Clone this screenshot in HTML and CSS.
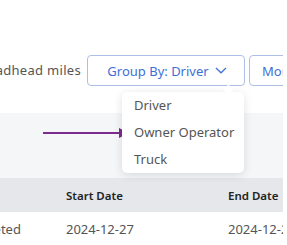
FILE: index.html
```html
<!DOCTYPE html>
<html lang="en">
<head>
    <meta charset="UTF-8">
    <title>Loads - Group By</title>
    <link rel="stylesheet" href="styles.css">
</head>
<body>
    <div class="frame">
        <div class="toolbar">
            <span class="label">Deadhead miles</span>
            <button class="btn group-btn">Group By: Driver
                <svg class="chev" width="12" height="7" viewBox="0 0 12 7"><path d="M1 1l5 4.8L11 1" fill="none" stroke="#3d6fd6" stroke-width="1.2"/></svg>
            </button>
            <button class="btn more-btn">More</button>

            <div class="menu">
                <div class="menu-item">Driver</div>
                <div class="menu-item">Owner Operator</div>
                <div class="menu-item">Truck</div>
            </div>
        </div>

        <div class="band">
            <svg class="arrow" width="90" height="14" viewBox="0 0 90 14"><path d="M0 7h78" stroke="#7b2c8c" stroke-width="2.2"/><path d="M76 2l10 5-10 5z" fill="#7b2c8c"/></svg>
        </div>

        <table class="grid">
            <thead>
                <tr><th class="c-status"></th><th>Start Date</th><th>End Date</th></tr>
            </thead>
            <tbody>
                <tr><td class="c-status">Completed</td><td>2024-12-27</td><td>2024-12-28</td></tr>
            </tbody>
        </table>
    </div>
</body>
</html>
```

FILE: styles.css
```css
body {
    margin: 0;
    background: #fff;
    font-family: "Noto Sans", "DejaVu Sans", sans-serif;
    color: #555;
}
.frame {
    width: 283px;
    height: 245px;
    overflow: hidden;
    position: relative;
}
.toolbar {
    height: 113px;
    display: flex;
    align-items: flex-start;
    justify-content: flex-end;
    padding-top: 55px;
    box-sizing: border-box;
    gap: 4px;
    position: relative;
    margin-right: -60px;
}
.toolbar > * {
    flex-shrink: 0;
}
.label {
    font-size: 13px;
    letter-spacing: 0.3px;
    color: #555;
    line-height: 31px;
    margin-right: 2px;
    white-space: nowrap;
}
.btn {
    height: 31px;
    border: 1px solid #aebfe6;
    border-radius: 4px;
    background: #fff;
    color: #3d6fd6;
    font-family: inherit;
    font-size: 13px;
    padding: 0 12px;
    white-space: nowrap;
}
.group-btn {
    width: 158px;
    display: flex;
    align-items: center;
    justify-content: center;
    gap: 6px;
    padding-left: 14px;
}
.more-btn {
    width: 94px;
    text-align: left;
}
.menu {
    position: absolute;
    left: 122px;
    top: 92px;
    width: 122px;
    background: #fff;
    border-radius: 5px;
    box-shadow: 0 2px 10px rgba(0, 0, 0, 0.12);
    z-index: 2;
}
.menu::before {
    content: "";
    position: absolute;
    right: 12px;
    top: -6px;
    width: 7px;
    height: 7px;
    background: #fff;
    transform: rotate(45deg);
}
.menu-item {
    height: 27px;
    line-height: 27px;
    padding-left: 12px;
    font-size: 13px;
    color: #555;
    white-space: nowrap;
}
.band {
    height: 65px;
    background: #f5f6f8;
    position: relative;
}
.arrow {
    position: absolute;
    left: 43px;
    top: 13px;
}
.grid {
    border-collapse: collapse;
    margin-left: -96px;
    table-layout: fixed;
    width: 486px;
}
.grid th, .grid td {
    width: 162px;
    text-align: left;
    padding: 0;
    font-size: 13px;
    white-space: nowrap;
}
.grid th {
    height: 34px;
    background: #e6e7eb;
    color: #222;
    font-size: 11.5px;
    font-weight: 600;
}
.grid td {
    height: 34px;
    color: #555;
}
.grid .c-status {
    padding-left: 50px;
    width: 112px;
}
```
